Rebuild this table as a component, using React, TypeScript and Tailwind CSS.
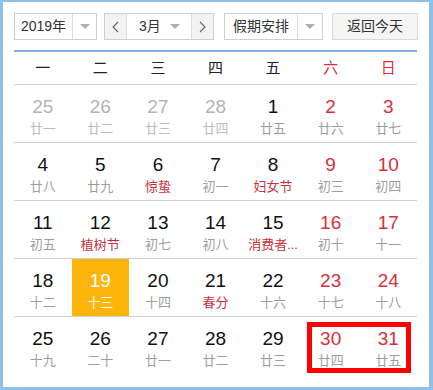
const font = "font-['Liberation_Sans','Noto_Sans_CJK_SC',sans-serif]";

type Day = { n: number; l: string; other?: boolean; red?: boolean; fest?: boolean; today?: boolean };

const rows: Day[][] = [
  [
    { n: 25, l: "廿一", other: true },
    { n: 26, l: "廿二", other: true },
    { n: 27, l: "廿三", other: true },
    { n: 28, l: "廿四", other: true },
    { n: 1, l: "廿五" },
    { n: 2, l: "廿六", red: true },
    { n: 3, l: "廿七", red: true },
  ],
  [
    { n: 4, l: "廿八" },
    { n: 5, l: "廿九" },
    { n: 6, l: "惊蛰", fest: true },
    { n: 7, l: "初一" },
    { n: 8, l: "妇女节", fest: true },
    { n: 9, l: "初三", red: true },
    { n: 10, l: "初四", red: true },
  ],
  [
    { n: 11, l: "初五" },
    { n: 12, l: "植树节", fest: true },
    { n: 13, l: "初七" },
    { n: 14, l: "初八" },
    { n: 15, l: "消费者...", fest: true },
    { n: 16, l: "初十", red: true },
    { n: 17, l: "十一", red: true },
  ],
  [
    { n: 18, l: "十二" },
    { n: 19, l: "十三", today: true },
    { n: 20, l: "十四" },
    { n: 21, l: "春分", fest: true },
    { n: 22, l: "十六" },
    { n: 23, l: "十七", red: true },
    { n: 24, l: "十八", red: true },
  ],
  [
    { n: 25, l: "十九" },
    { n: 26, l: "二十" },
    { n: 27, l: "廿一" },
    { n: 28, l: "廿二" },
    { n: 29, l: "廿三" },
    { n: 30, l: "廿四", red: true },
    { n: 31, l: "廿五", red: true },
  ],
];

const week = ["一", "二", "三", "四", "五", "六", "日"];

function Arrow() {
  return <span className="w-0 h-0 border-l-[5px] border-r-[5px] border-t-[5px] border-l-transparent border-r-transparent border-t-[#b0b0b0]" />;
}

function Chevron({ left }: { left?: boolean }) {
  return (
    <svg width="7" height="12" viewBox="0 0 7 12" fill="none" stroke="#666" strokeWidth="1.1">
      <path d={left ? "M6 1 L1 6 L6 11" : "M1 1 L6 6 L1 11"} />
    </svg>
  );
}

function Cell({ d }: { d: Day }) {
  const num = d.today ? "text-white" : d.other ? "text-[#b4b4b4]" : d.red ? "text-[#d8303a]" : "text-[#111]";
  const lun = d.today ? "text-white" : d.fest ? "text-[#c8323a]" : d.other ? "text-[#bcbcbc]" : "text-[#9e9e9e]";
  return (
    <div className={`flex flex-col items-center pt-[12px] ${d.today ? "bg-[#fdb50c]" : ""}`}>
      <span className={`text-[19px] leading-[20px] ${num}`}>{d.n}</span>
      <span className={`text-[13px] leading-[17px] mt-[3px] whitespace-nowrap ${lun}`}>{d.l}</span>
    </div>
  );
}

export default function App() {
  return (
    <div className={`relative w-[433px] h-[390px] bg-white border-t-[2px] border-l-[3px] border-r-[4px] border-b-[3px] border-[#8fc0ea] pl-[11px] pt-[11px] ${font}`}>
      <div className="flex items-center h-[27px] text-[14px] text-[#333]">
        <div className="flex h-full w-[83px] border border-[#cfcfcf]">
          <span className="flex items-center justify-center w-[57px]">2019年</span>
          <span className="flex items-center justify-center flex-1 border-l border-[#dcdcdc]"><Arrow /></span>
        </div>
        <div className="flex h-full w-[110px] ml-[7px] border border-[#cfcfcf]">
          <span className="flex items-center justify-center w-[22px] bg-[#f3f3f3] border-r border-[#dcdcdc]"><Chevron left /></span>
          <span className="flex items-center justify-between flex-1 pl-[12px] pr-[11px]">3月<Arrow /></span>
          <span className="flex items-center justify-center w-[22px] bg-[#f3f3f3] border-l border-[#dcdcdc]"><Chevron /></span>
        </div>
        <div className="flex h-full w-[99px] ml-[10px] border border-[#cfcfcf]">
          <span className="flex items-center justify-center w-[72px]">假期安排</span>
          <span className="flex items-center justify-center flex-1 border-l border-[#dcdcdc]"><Arrow /></span>
        </div>
        <div className="flex items-center justify-center h-full w-[86px] ml-[9px] border border-[#dadada] bg-[#f5f5f5]">返回今天</div>
      </div>

      <div className="w-[403px] mt-[10px] border-t-[2px] border-[#7fb2e2]">
        <div className="grid grid-cols-7 h-[33px] items-center border-b border-[#cfcfcf] text-[15px] text-[#222]">
          {week.map((w, i) => (
            <span key={w} className={`text-center ${i >= 5 ? "text-[#d8303a]" : ""}`}>{w}</span>
          ))}
        </div>
        {rows.map((r, i) => (
          <div key={i} className={`grid grid-cols-7 h-[58px] ${i < rows.length - 1 ? "border-b border-[#cfcfcf]" : ""}`}>
            {r.map((d) => (
              <Cell key={`${i}-${d.n}`} d={d} />
            ))}
          </div>
        ))}
      </div>

      <div className="absolute left-[304px] top-[320px] w-[104px] h-[51px] border-[5px] border-[#f00]" />
    </div>
  );
}
